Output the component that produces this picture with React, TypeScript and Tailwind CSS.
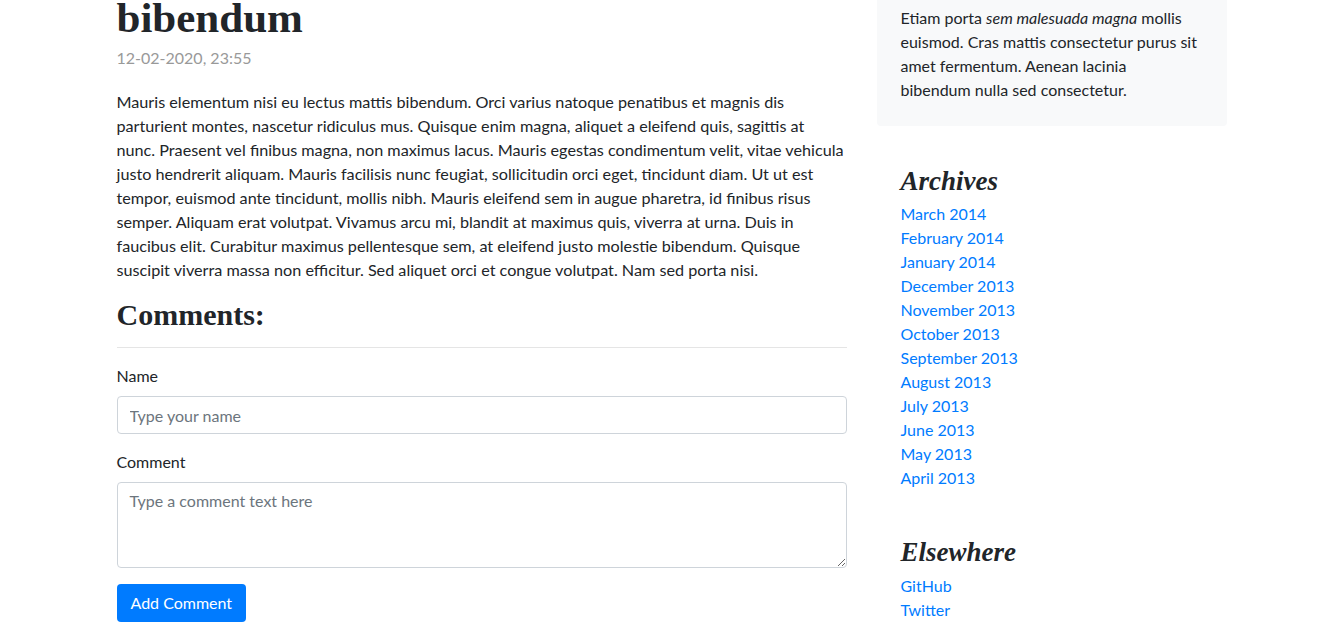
const paragraph = [
  "Mauris elementum nisi eu lectus mattis bibendum. Orci varius natoque penatibus et magnis dis",
  "parturient montes, nascetur ridiculus mus. Quisque enim magna, aliquet a eleifend quis, sagittis at",
  "nunc. Praesent vel finibus magna, non maximus lacus. Mauris egestas condimentum velit, vitae vehicula",
  "justo hendrerit aliquam. Mauris facilisis nunc feugiat, sollicitudin orci eget, tincidunt diam. Ut ut est",
  "tempor, euismod ante tincidunt, mollis nibh. Mauris eleifend sem in augue pharetra, id finibus risus",
  "semper. Aliquam erat volutpat. Vivamus arcu mi, blandit at maximus quis, viverra at urna. Duis in",
  "faucibus elit. Curabitur maximus pellentesque sem, at eleifend justo molestie bibendum. Quisque",
  "suscipit viverra massa non efficitur. Sed aliquet orci et congue volutpat. Nam sed porta nisi.",
];

const archives = [
  "March 2014",
  "February 2014",
  "January 2014",
  "December 2013",
  "November 2013",
  "October 2013",
  "September 2013",
  "August 2013",
  "July 2013",
  "June 2013",
  "May 2013",
  "April 2013",
];

const serif = "font-['Liberation_Serif',serif]";

export default function App() {
  return (
    <div className="h-[624px] overflow-hidden bg-white font-['Lato',sans-serif] text-[16px] leading-6 text-[#212529]">
      <div className="mx-auto flex w-[1110px] gap-[30px] pl-[1px]">
        {/* Main post */}
        <main className="w-[730px] shrink-0">
          <h2 className={`${serif} -mt-[4px] text-[43px] font-bold leading-none text-[#212529]`}>
            bibendum
          </h2>
          <p className="mt-[7px] text-[#999]">12-02-2020, 23:55</p>

          <div className="mt-[20px] text-[16.2px]">
            {paragraph.map((line) => (
              <div key={line} className="whitespace-nowrap">
                {line}
              </div>
            ))}
          </div>

          <h3 className={`${serif} mt-[15px] text-[30px] font-bold leading-9`}>Comments:</h3>
          <hr className="mt-[14px] border-[#e5e5e5]" />

          <form className="mt-[16px]">
            <label className="block">Name</label>
            <input
              type="text"
              placeholder="Type your name"
              className="mt-[8px] block h-[38px] w-full rounded-[4px] border border-[#ced4da] px-3 placeholder:text-[#6c757d]"
            />
            <label className="mt-[16px] block">Comment</label>
            <textarea
              placeholder="Type a comment text here"
              className="mt-[8px] block h-[86px] w-full rounded-[4px] border border-[#ced4da] px-3 py-[6px] placeholder:text-[#6c757d]"
            />
            <button
              type="button"
              className="mt-[16px] h-[38px] rounded-[4px] bg-[#007bff] px-[14px] text-white"
            >
              Add Comment
            </button>
          </form>
        </main>

        {/* Sidebar */}
        <aside className="w-[350px] shrink-0">
          <div className="-mt-[18px] rounded-[4px] bg-[#f8f9fa] p-6">
            <p>
              Etiam porta <em>sem malesuada magna</em> mollis
              <br />
              euismod. Cras mattis consectetur purus sit
              <br />
              amet fermentum. Aenean lacinia
              <br />
              bibendum nulla sed consectetur.
            </p>
          </div>

          <div className="mt-[39px] px-6">
            <h4 className={`${serif} text-[27px] font-bold italic leading-8`}>Archives</h4>
            <ol className="mt-[5px]">
              {archives.map((a) => (
                <li key={a}>
                  <a href="#" className="text-[#007bff]">
                    {a}
                  </a>
                </li>
              ))}
            </ol>
          </div>

          <div className="mt-[46px] px-6">
            <h4 className={`${serif} text-[27px] font-bold italic leading-8`}>Elsewhere</h4>
            <ol className="mt-[6px]">
              <li>
                <a href="#" className="text-[#007bff]">GitHub</a>
              </li>
              <li>
                <a href="#" className="text-[#007bff]">Twitter</a>
              </li>
            </ol>
          </div>
        </aside>
      </div>
    </div>
  );
}
